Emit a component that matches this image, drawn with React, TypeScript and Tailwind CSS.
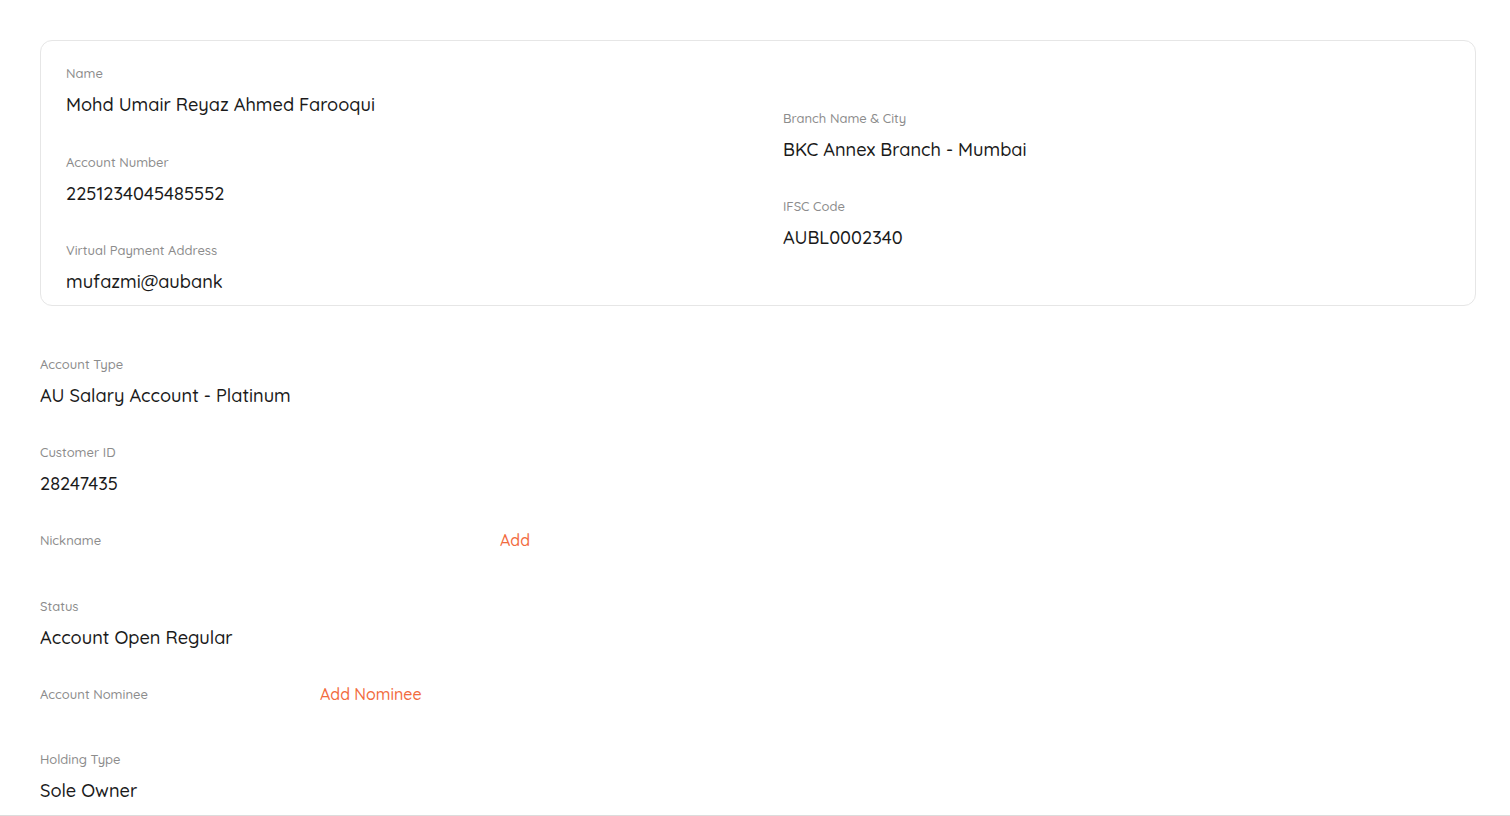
import React from "react";

const FONT = { fontFamily: '"Quicksand", "Lato", "Noto Sans", sans-serif' };

function Field({ label, value, className = "" }: { label: string; value: string; className?: string }) {
  return (
    <div className={className}>
      <div className="text-[13px] leading-[16px] font-medium text-[#8c8c8c]">{label}</div>
      <div className="mt-[13px] text-[18.2px] leading-[22px] font-medium text-[#1a1a1a]">{value}</div>
    </div>
  );
}

export default function App() {
  return (
    <div className="min-h-screen bg-white" style={FONT}>
      <div className="pl-[40px] pr-[34px] pt-[40px]">
        <div className="flex rounded-xl border border-[#e6e6e6]">
          <div className="w-1/2 pl-[25px] pt-[24px] pb-[12px]">
            <Field label="Name" value="Mohd Umair Reyaz Ahmed Farooqui" />
            <Field className="mt-[38px]" label="Account Number" value="2251234045485552" />
            <Field className="mt-[37px]" label="Virtual Payment Address" value="mufazmi@aubank" />
          </div>
          <div className="flex w-1/2 flex-col justify-center pl-[25px] pt-[12px]">
            <Field label="Branch Name & City" value="BKC Annex Branch - Mumbai" />
            <Field className="mt-[37px]" label="IFSC Code" value="AUBL0002340" />
          </div>
        </div>
      </div>
      <div className="border-b border-[#dcdcdc] px-[40px] pt-[50px] pb-[13px]">
        <Field label="Account Type" value="AU Salary Account - Platinum" />
        <Field className="mt-[37px]" label="Customer ID" value="28247435" />
        <div className="mt-[37px] flex items-center">
          <div className="w-[460px] text-[13px] leading-[16px] font-medium text-[#8c8c8c]">Nickname</div>
          <div className="text-[16px] leading-[16px] font-medium text-[#f26b3d]">Add</div>
        </div>
        <Field className="mt-[50px]" label="Status" value="Account Open Regular" />
        <div className="mt-[37px] flex items-center">
          <div className="w-[280px] text-[13px] leading-[16px] font-medium text-[#8c8c8c]">Account Nominee</div>
          <div className="text-[16px] leading-[16px] font-medium text-[#f26b3d]">Add Nominee</div>
        </div>
        <Field className="mt-[49px]" label="Holding Type" value="Sole Owner" />
      </div>
    </div>
  );
}
